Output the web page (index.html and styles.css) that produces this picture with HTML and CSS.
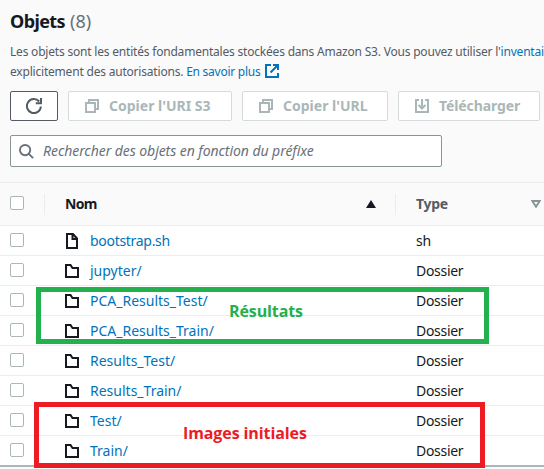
FILE: index.html
```html
<!DOCTYPE html>
<html lang="fr">
<head>
<meta charset="utf-8">
<title>Objets</title>
<link rel="stylesheet" href="styles.css">
</head>
<body>
<svg class="defs" aria-hidden="true">
  <symbol id="folder" viewBox="0 0 14 14"><path d="M1 13V1h4.500l2 3H13v9z" fill="none" stroke="currentColor" stroke-width="2"/></symbol>
  <symbol id="file" viewBox="0 0 14 16"><path d="M2 1h6l4 4.500V15H2z M7.500 1v5H12" fill="none" stroke="currentColor" stroke-width="2"/></symbol>
  <symbol id="copy" viewBox="0 0 14 14"><path d="M1 4h9v9H1z M4 4V1h9v9h-3" fill="none" stroke="currentColor" stroke-width="2"/></symbol>
</svg>
<header class="panel-head">
  <h1>Objets <span>(8)</span></h1>
  <p>Les objets sont les entités fondamentales stockées dans Amazon S3. Vous pouvez utiliser l'<a>inventai</a><br>explicitement des autorisations. <a class="more">En savoir plus<svg viewBox="0 0 14 14"><path d="M6 1H1v12h12V9 M8 1h5v5 M13 1L5.500 8.500" fill="none" stroke="currentColor" stroke-width="2"/></svg></a></p>
  <div class="actions">
    <button class="btn refresh" aria-label="Actualiser"><svg viewBox="0 0 16 16"><path d="M14.900 8.500A7 7 0 1 1 13.200 3.500 M15 0v5.200H9.800" fill="none" stroke="currentColor" stroke-width="2"/></svg></button>
    <button class="btn uri" disabled><svg viewBox="0 0 14 14"><use href="#copy"/></svg>Copier l'URI S3</button>
    <button class="btn url" disabled><svg viewBox="0 0 14 14"><use href="#copy"/></svg>Copier l'URL</button>
    <button class="btn download" disabled><svg viewBox="0 0 14 14"><path d="M4 1H1v12h12V1h-3 M7 0v9.500 M3.500 6L7 9.500 10.500 6" fill="none" stroke="currentColor" stroke-width="2"/></svg>Télécharger</button>
  </div>
  <div class="search"><svg viewBox="0 0 16 16"><path d="M10.500 10.500L15 15" stroke="currentColor" stroke-width="2"/><circle cx="6.500" cy="6.500" r="5.500" fill="none" stroke="currentColor" stroke-width="2"/></svg><span>Rechercher des objets en fonction du préfixe</span></div>
</header>
<main class="table">
  <div class="row head"><i class="check"></i><div class="name">Nom<svg class="sort" viewBox="0 0 10 8"><path d="M5 0l5 8H0z" fill="currentColor"/></svg></div><div class="type">Type<svg class="sort" viewBox="0 0 10 8"><path d="M1.300 1h7.400L5 6.700z" fill="none" stroke="currentColor" stroke-width="2"/></svg></div></div>
  <div class="row"><i class="check"></i><div class="name"><svg class="file"><use href="#file"/></svg><a class="tight">bootstrap.sh</a></div><div class="type">sh</div></div>
  <div class="row"><i class="check"></i><div class="name"><svg><use href="#folder"/></svg><a>jupyter/</a></div><div class="type">Dossier</div></div>
  <div class="row"><i class="check"></i><div class="name"><svg><use href="#folder"/></svg><a>PCA_Results_Test/</a></div><div class="type">Dossier</div></div>
  <div class="row"><i class="check"></i><div class="name"><svg><use href="#folder"/></svg><a>PCA_Results_Train/</a></div><div class="type">Dossier</div></div>
  <div class="row"><i class="check"></i><div class="name"><svg><use href="#folder"/></svg><a>Results_Test/</a></div><div class="type">Dossier</div></div>
  <div class="row"><i class="check"></i><div class="name"><svg><use href="#folder"/></svg><a>Results_Train/</a></div><div class="type">Dossier</div></div>
  <div class="row"><i class="check"></i><div class="name"><svg><use href="#folder"/></svg><a>Test/</a></div><div class="type">Dossier</div></div>
  <div class="row"><i class="check"></i><div class="name"><svg><use href="#folder"/></svg><a>Train/</a></div><div class="type">Dossier</div></div>
</main>
<div class="note results"><span>Résultats</span></div>
<div class="note images"><span>Images initiales</span></div>
</body>
</html>
```
FILE: styles.css
```css
* { box-sizing: border-box; }
body { margin: 0; height: 469px; overflow: hidden; position: relative; background: #fafafa; color: #16191f; font: 14px/20px "Noto Sans", sans-serif; }
svg { display: block; flex: none; }
.defs { position: absolute; width: 0; height: 0; }
a { color: #0073bb; }
.panel-head { height: 182px; padding: 9px 0 0 10px; white-space: nowrap; }
h1 { margin: 0; font-size: 18px; line-height: 24px; font-weight: 700; letter-spacing: -0.6px; }
h1 span { font-weight: 400; color: #687078; letter-spacing: 0; margin-left: 1px; }
p { margin: 9px 0 0; font-size: 12px; line-height: 20px; letter-spacing: -0.2px; color: #545b64; }
.more svg { display: inline-block; width: 14px; height: 14px; margin-left: 4px; vertical-align: -2px; }
.more { letter-spacing: -0.25px; }
.actions { display: flex; margin-top: 9px; }
.btn { display: flex; flex: none; align-items: center; height: 30px; padding: 0 0 0 16px; margin: 0 10px 0 0; border: 1px solid #d5dbdb; border-radius: 2px; background: #fff; color: #aab7b8; font: 700 14px/20px "Noto Sans", sans-serif; }
.btn svg { width: 14px; height: 14px; margin-right: 10px; }
.refresh { width: 48px; border-color: #545b64; color: #545b64; padding-left: 15px; }
.refresh svg { width: 16px; height: 16px; margin: 0; }
.uri { width: 164px; }
.url { width: 146px; }
.download { width: 142px; letter-spacing: -0.1px; }
.search { display: flex; align-items: center; width: 432px; height: 32px; margin-top: 14px; padding-left: 8px; border: 1px solid #879596; border-radius: 2px; background: #fff; color: #687078; font-style: italic; letter-spacing: -0.06px; }
.search svg { width: 15px; height: 15px; margin-right: 9px; }
.table { border-top: 1px solid #eaeded; }
.row { display: grid; grid-template-columns: 65px 351px 128px; height: 30px; background: #fff; border-bottom: 1px solid #eaeded; }
.row:last-child { height: 31px; padding-bottom: 0; border-bottom: 2px solid #aab7b8; }
.row > div { display: flex; align-items: center; }
.check { width: 14px; height: 14px; margin: 7px 0 0 10px; border: 1px solid #aab7b8; border-radius: 2px; background: #fff; }
.name svg { width: 14px; height: 14px; margin-right: 11px; margin-top: 1px; }
.name .file { height: 16px; margin-top: 0; }
.tight, .type { letter-spacing: -0.3px; }
.head { height: 43px; background: #fafafa; font-weight: 700; }
.head .name { letter-spacing: -0.7px; background: linear-gradient(#eaeded, #eaeded) right 20px center / 1px 21px no-repeat; }
.head .check { position: relative; margin-top: 13px; }
.head .check::after { content: ""; position: absolute; left: 33px; top: -3px; width: 1px; height: 21px; background: #eaeded; }
.head .type { color: #545b64; }
.row .sort { width: 10px; height: 8px; margin: 0 40px 0 auto; }
.row .type .sort { margin-right: 3px; color: #879596; }
.note { position: absolute; border: 5px solid; font: 700 16px/22px "Open Sans", sans-serif; letter-spacing: -0.1px; }
.note span { position: absolute; white-space: nowrap; }
.results { left: 36px; top: 287px; width: 453px; height: 57px; color: #22b14c; }
.results span { left: 188px; top: 8px; }
.images { left: 34px; top: 402px; width: 451px; height: 66px; color: #ed1c24; }
.images span { left: 144px; top: 15px; }
```
